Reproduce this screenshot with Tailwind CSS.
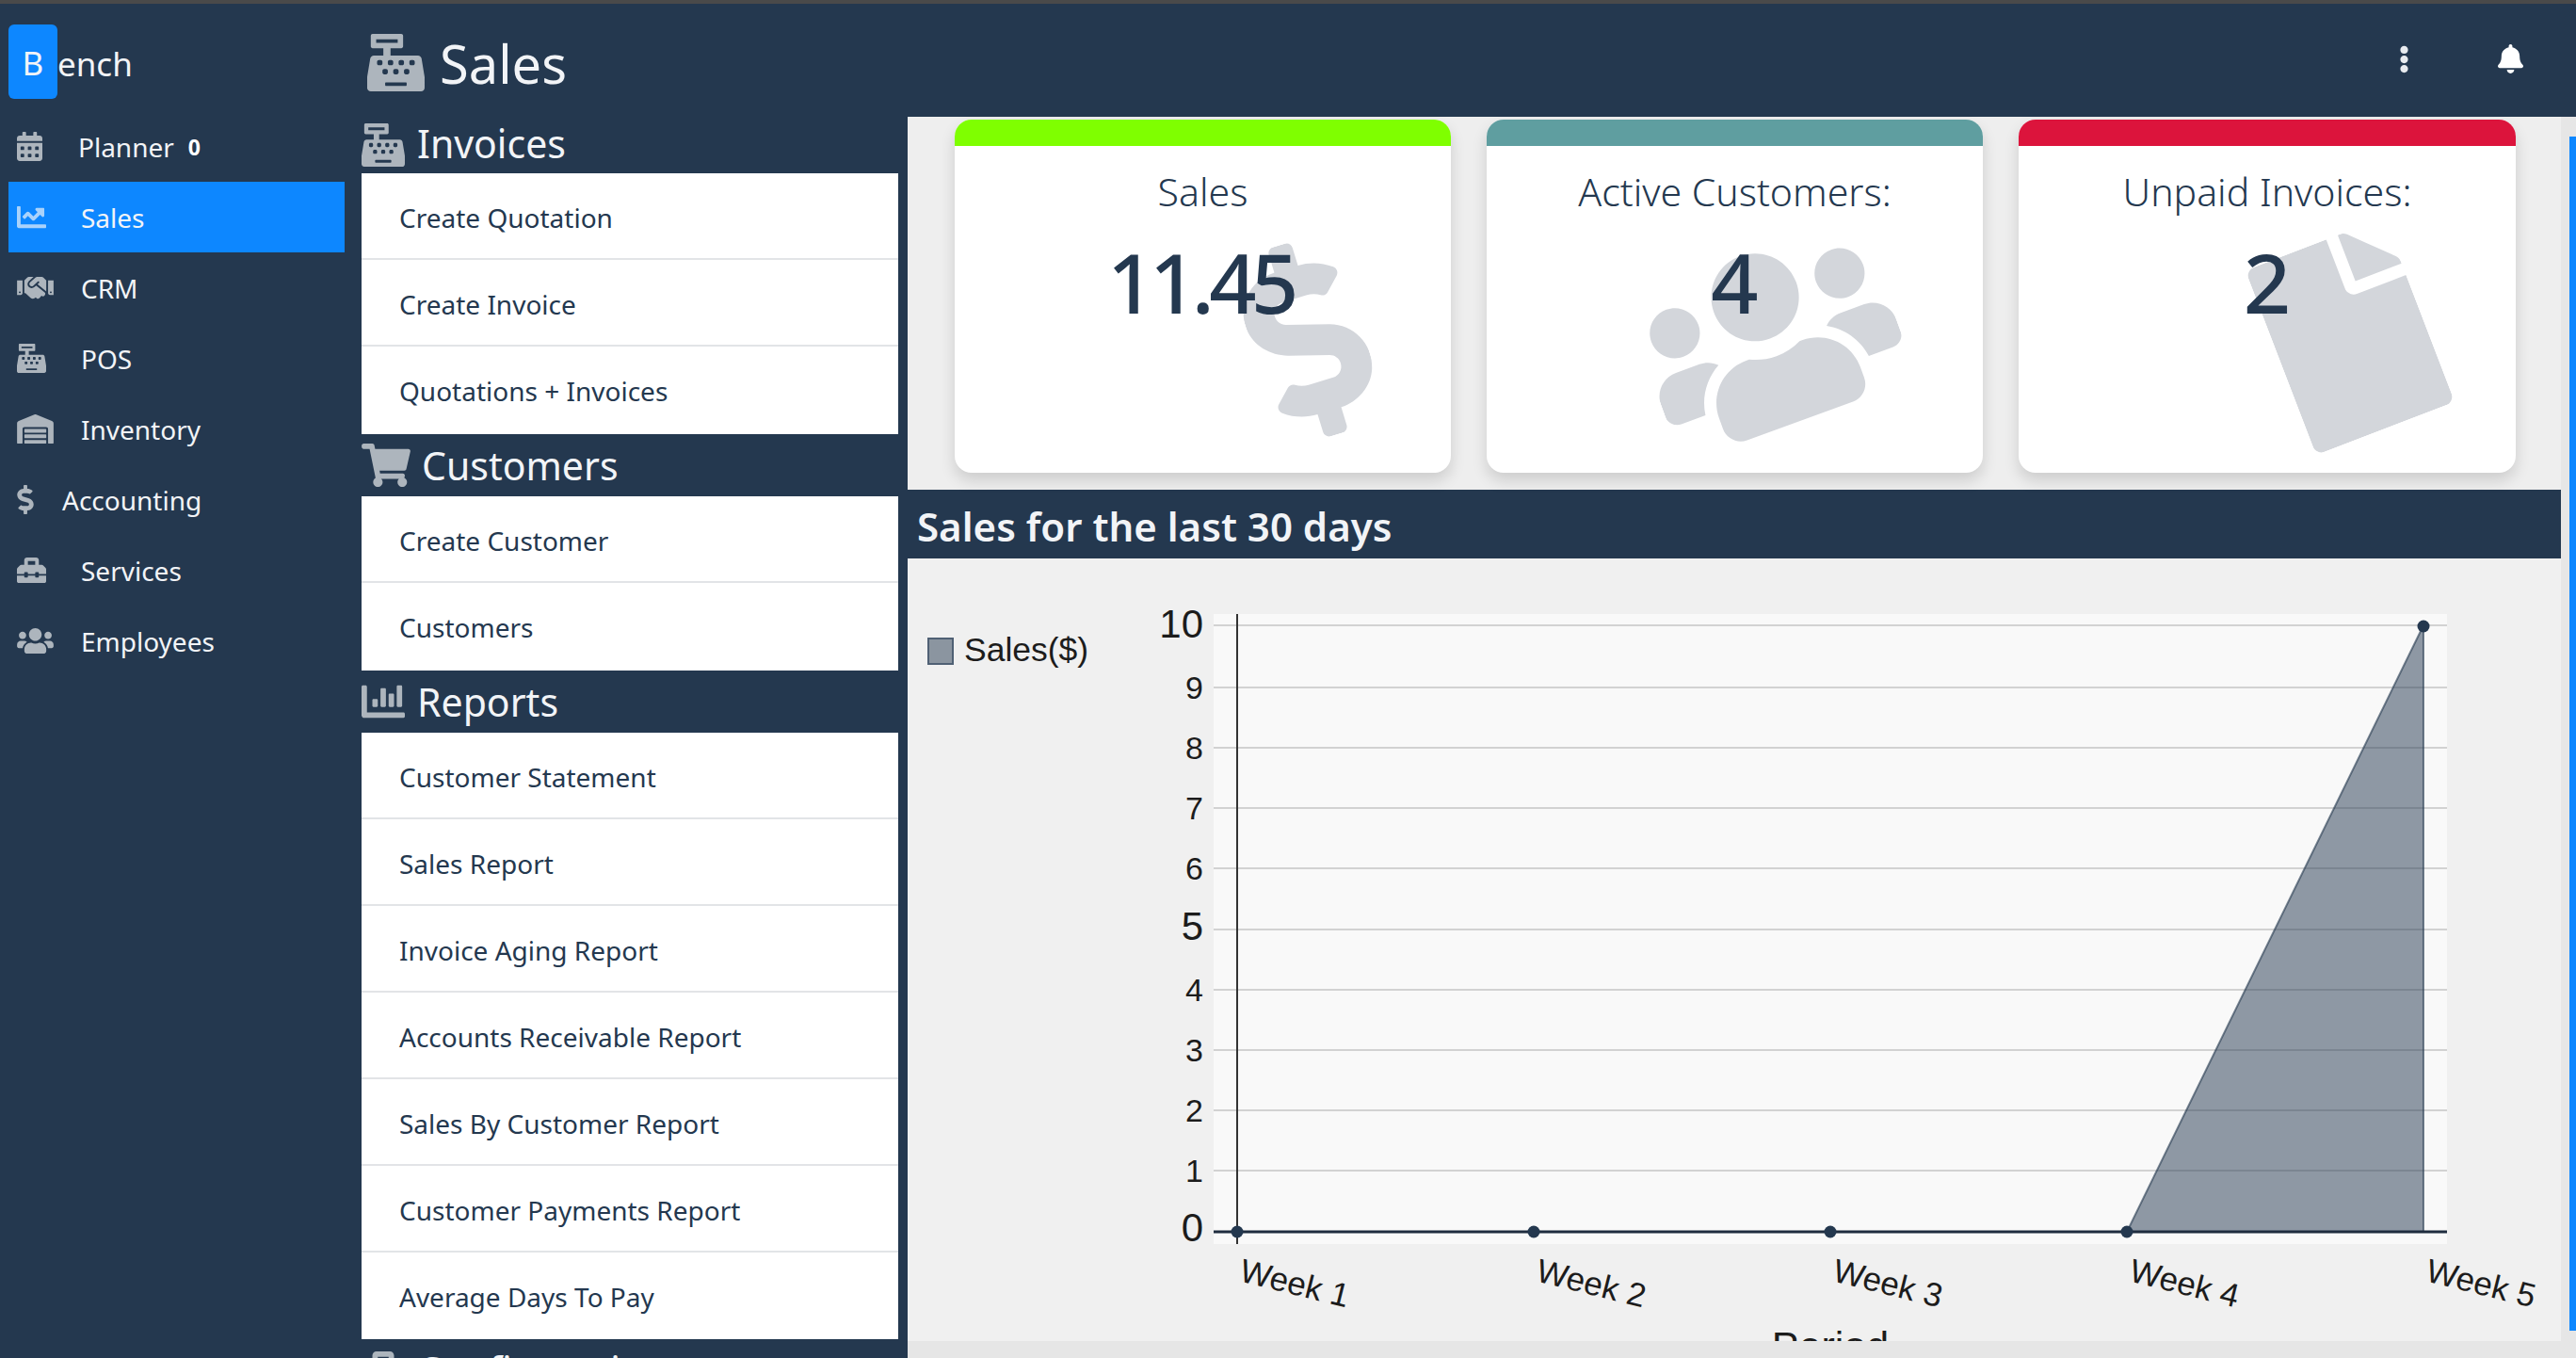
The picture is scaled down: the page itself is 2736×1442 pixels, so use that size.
<!DOCTYPE html>
<html lang="en">
<head>
  <meta charset="UTF-8">
  <title>Sales</title>
  <script src="https://cdn.jsdelivr.net/npm/@tailwindcss/browser@4"></script>
</head>
<body class="h-screen overflow-hidden bg-[#24384f] font-['Noto_Sans','Open_Sans',sans-serif] text-[28px] text-[#f2f4f7]">
  <svg class="hidden">
    <symbol id="register" viewBox="0 0 512 512"><path fill="currentColor" d="M511.1 378.8l-26.7-160c-2.6-15.4-15.9-26.7-31.6-26.7H208v-64h96c8.8 0 16-7.2 16-16V16c0-8.8-7.2-16-16-16H48c-8.8 0-16 7.2-16 16v96c0 8.8 7.2 16 16 16h96v64H59.1c-15.6 0-29 11.3-31.6 26.7L.8 378.7c-.6 3.5-.9 7-.9 10.5V480c0 17.7 14.3 32 32 32h448c17.7 0 32-14.3 32-32v-90.7c.1-3.5-.2-7-.8-10.5zM280 248c0-8.8 7.2-16 16-16h16c8.8 0 16 7.2 16 16v16c0 8.8-7.2 16-16 16h-16c-8.8 0-16-7.2-16-16v-16zm-32 64h16c8.8 0 16 7.2 16 16v16c0 8.8-7.2 16-16 16h-16c-8.8 0-16-7.2-16-16v-16c0-8.8 7.2-16 16-16zm-32-80c8.8 0 16 7.2 16 16v16c0 8.8-7.2 16-16 16h-16c-8.8 0-16-7.2-16-16v-16c0-8.8 7.2-16 16-16h16zM80 80V48h192v32H80zm40 200h-16c-8.8 0-16-7.2-16-16v-16c0-8.8 7.2-16 16-16h16c8.8 0 16 7.2 16 16v16c0 8.8-7.2 16-16 16zm16 64v-16c0-8.8 7.2-16 16-16h16c8.8 0 16 7.2 16 16v16c0 8.8-7.2 16-16 16h-16c-8.8 0-16-7.2-16-16zm216 112c0 4.4-3.6 8-8 8H168c-4.4 0-8-3.6-8-8v-16c0-4.4 3.6-8 8-8h176c4.4 0 8 3.6 8 8v16zm24-112c0 8.8-7.2 16-16 16h-16c-8.8 0-16-7.2-16-16v-16c0-8.8 7.2-16 16-16h16c8.8 0 16 7.2 16 16v16zm48-80c0 8.8-7.2 16-16 16h-16c-8.8 0-16-7.2-16-16v-16c0-8.8 7.2-16 16-16h16c8.8 0 16 7.2 16 16v16z"/></symbol>
    <symbol id="calendar" viewBox="0 0 448 512"><path fill="currentColor" d="M0 464c0 26.5 21.5 48 48 48h352c26.5 0 48-21.5 48-48V192H0v272zm320-196c0-6.6 5.4-12 12-12h40c6.6 0 12 5.4 12 12v40c0 6.6-5.4 12-12 12h-40c-6.6 0-12-5.4-12-12v-40zm0 128c0-6.6 5.4-12 12-12h40c6.6 0 12 5.4 12 12v40c0 6.6-5.4 12-12 12h-40c-6.6 0-12-5.4-12-12v-40zM192 268c0-6.6 5.4-12 12-12h40c6.6 0 12 5.4 12 12v40c0 6.6-5.4 12-12 12h-40c-6.6 0-12-5.4-12-12v-40zm0 128c0-6.6 5.4-12 12-12h40c6.6 0 12 5.4 12 12v40c0 6.6-5.4 12-12 12h-40c-6.6 0-12-5.4-12-12v-40zM64 268c0-6.6 5.4-12 12-12h40c6.6 0 12 5.4 12 12v40c0 6.6-5.4 12-12 12H76c-6.6 0-12-5.4-12-12v-40zm0 128c0-6.6 5.4-12 12-12h40c6.6 0 12 5.4 12 12v40c0 6.6-5.4 12-12 12H76c-6.6 0-12-5.4-12-12v-40zM400 64h-48V16c0-8.8-7.2-16-16-16h-32c-8.8 0-16 7.2-16 16v48H160V16c0-8.8-7.2-16-16-16h-32c-8.8 0-16 7.2-16 16v48H48C21.5 64 0 85.5 0 112v48h448v-48c0-26.5-21.5-48-48-48z"/></symbol>
    <symbol id="chartline" viewBox="0 0 512 512"><path fill="currentColor" d="M496 384H64V80c0-8.84-7.16-16-16-16H16C7.16 64 0 71.16 0 80v336c0 17.67 14.33 32 32 32h464c8.84 0 16-7.16 16-16v-32c0-8.84-7.16-16-16-16zM464 96H345.94c-21.38 0-32.09 25.85-16.97 40.97l32.4 32.4L288 242.75l-73.37-73.37c-12.5-12.5-32.76-12.5-45.25 0l-68.69 68.69c-6.25 6.25-6.25 16.38 0 22.63l22.62 22.62c6.25 6.25 16.38 6.25 22.63 0L192 237.25l73.37 73.37c12.5 12.5 32.76 12.5 45.25 0l96-96 32.4 32.4c15.12 15.12 40.97 4.41 40.97-16.97V112c.01-8.84-7.15-16-15.99-16z"/></symbol>
    <symbol id="handshake" viewBox="0 0 640 512"><path fill="currentColor" d="M434.7 64h-85.9c-8 0-15.7 3-21.6 8.4l-98.3 90c-.1.1-.2.3-.3.4-16.6 15.6-16.3 40.5-2.1 56 12.7 13.9 39.4 17.6 56.1 2.7.1-.1.3-.1.4-.2l79.9-73.2c6.5-5.9 16.7-5.5 22.6 1 6 6.5 5.5 16.6-1 22.6l-26.1 23.9L504 313.8c2.9 2.4 5.5 5 7.9 7.7V128l-54.6-54.6c-5.9-6-14.1-9.4-22.6-9.4zM544 128.2v223.9c0 17.7 14.3 32 32 32h64V128.2h-96zm48 223.9c-8.8 0-16-7.2-16-16s7.2-16 16-16 16 7.2 16 16-7.2 16-16 16zM0 384h64c17.7 0 32-14.3 32-32V128.2H0V384zm48-63.9c8.8 0 16 7.2 16 16s-7.2 16-16 16-16-7.2-16-16c0-8.9 7.2-16 16-16zm435.9 18.6L334.6 217.5l-30 27.5c-29.7 27.1-75.2 24.5-101.7-4.4-26.9-29.4-24.8-74.9 4.4-101.7L289.1 64h-83.8c-8.5 0-16.6 3.4-22.6 9.4L128 128v223.9h18.3l90.5 81.9c27.4 22.3 67.7 18.1 90-9.3l.2-.2 17.9 15.5c15.9 13 39.4 10.5 52.3-5.4l31.4-38.6 5.4 4.4c13.7 11.1 33.9 9.1 45-4.7l9.5-11.7c11.2-13.8 9.1-33.9-4.6-45.1z"/></symbol>
    <symbol id="warehouse" viewBox="0 0 640 512"><path fill="currentColor" d="M504 352H136.4c-4.4 0-8 3.6-8 8l-.1 48c0 4.4 3.6 8 8 8H504c4.4 0 8-3.6 8-8v-48c0-4.4-3.6-8-8-8zm0 96H136.1c-4.4 0-8 3.6-8 8l-.1 48c0 4.4 3.6 8 8 8h368c4.4 0 8-3.6 8-8v-48c0-4.4-3.6-8-8-8zm0-192H136.6c-4.4 0-8 3.6-8 8l-.1 48c0 4.4 3.6 8 8 8H504c4.4 0 8-3.6 8-8v-48c0-4.4-3.6-8-8-8zm106.5-139L338.4 3.7a48.15 48.15 0 0 0-36.9 0L29.5 117C11.7 124.5 0 141.9 0 161.3V504c0 4.4 3.6 8 8 8h80c4.4 0 8-3.6 8-8V256c0-17.6 14.6-32 32.6-32h382.8c18 0 32.6 14.4 32.6 32v248c0 4.4 3.6 8 8 8h80c4.4 0 8-3.6 8-8V161.3c0-19.4-11.7-36.8-29.5-44.3z"/></symbol>
    <symbol id="dollar" viewBox="0 0 288 512"><path fill="currentColor" d="M209.2 233.4l-108-31.6C88.7 198.2 80 186.5 80 173.5c0-16.3 13.2-29.5 29.5-29.5h66.3c12.2 0 24.2 3.7 34.2 10.5 6.1 4.1 14.3 3.1 19.5-2l34.8-34c7.1-6.9 6.1-18.4-1.8-24.5C238 74.8 207.4 64.1 176 64V16c0-8.8-7.2-16-16-16h-32c-8.8 0-16 7.2-16 16v48h-2.5C45.8 64-5.4 118.7.5 183.6c4.2 46.1 39.4 83.6 83.8 96.6l102.5 30c12.5 3.7 21.2 15.3 21.2 28.3 0 16.3-13.2 29.5-29.5 29.5h-66.3C100 368 88 364.3 78 357.5c-6.1-4.1-14.3-3.1-19.5 2l-34.8 34c-7.1 6.9-6.1 18.4 1.8 24.5 24.5 19.2 55.1 29.9 86.5 30v48c0 8.8 7.2 16 16 16h32c8.8 0 16-7.2 16-16v-48.2c46.6-.9 90.3-28.6 105.7-72.7 21.5-61.6-14.6-124.8-72.5-141.7z"/></symbol>
    <symbol id="toolbox" viewBox="0 0 512 512"><path fill="currentColor" d="M502.63 214.63l-45.25-45.25c-6-6-14.14-9.37-22.63-9.37H384V80c0-26.51-21.49-48-48-48H176c-26.51 0-48 21.49-48 48v80H77.25c-8.49 0-16.62 3.37-22.63 9.37L9.37 214.63c-6 6-9.37 14.14-9.37 22.63V320h128v-16c0-8.84 7.16-16 16-16h32c8.84 0 16 7.16 16 16v16h128v-16c0-8.84 7.16-16 16-16h32c8.84 0 16 7.16 16 16v16h128v-82.75c0-8.48-3.37-16.62-9.37-22.62zM320 160H192V96h128v64zm64 208c0 8.84-7.16 16-16 16h-32c-8.84 0-16-7.16-16-16v-16H192v16c0 8.84-7.16 16-16 16h-32c-8.84 0-16-7.16-16-16v-16H0v96c0 17.67 14.33 32 32 32h448c17.67 0 32-14.33 32-32v-96H384v16z"/></symbol>
    <symbol id="users" viewBox="0 0 640 512"><path fill="currentColor" d="M96 224c35.3 0 64-28.7 64-64s-28.7-64-64-64-64 28.7-64 64 28.7 64 64 64zm448 0c35.3 0 64-28.7 64-64s-28.7-64-64-64-64 28.7-64 64 28.7 64 64 64zm32 32h-64c-17.6 0-33.5 7.1-45.1 18.6 40.3 22.1 68.9 62 75.1 109.4h66c17.7 0 32-14.3 32-32v-32c0-35.3-28.7-64-64-64zm-256 0c61.9 0 112-50.1 112-112S381.9 32 320 32 208 82.1 208 144s50.1 112 112 112zm76.8 32h-8.3c-20.8 10-43.9 16-68.5 16s-47.6-6-68.5-16h-8.3C179.6 288 128 339.6 128 403.2V432c0 26.5 21.5 48 48 48h288c26.5 0 48-21.5 48-48v-28.8c0-63.6-51.6-115.2-115.2-115.2zm-223.7-13.4C161.5 263.1 145.6 256 128 256H64c-35.3 0-64 28.7-64 64v32c0 17.7 14.3 32 32 32h65.9c6.3-47.4 34.9-87.3 75.2-109.4z"/></symbol>
    <symbol id="cart" viewBox="0 0 576 512"><path fill="currentColor" d="M528.12 301.319l47.273-208C578.806 78.301 567.391 64 551.99 64H159.208l-9.166-44.81C147.758 8.021 137.93 0 126.529 0H24C10.745 0 0 10.745 0 24v16c0 13.255 10.745 24 24 24h69.883l70.248 343.435C147.325 417.1 136 435.222 136 456c0 30.928 25.072 56 56 56s56-25.072 56-56c0-15.674-6.447-29.835-16.824-40h209.647C430.447 426.165 424 440.326 424 456c0 30.928 25.072 56 56 56s56-25.072 56-56c0-22.172-12.888-41.332-31.579-50.405l5.517-24.276c3.413-15.018-8.002-29.319-23.403-29.319H218.117l-6.545-32h293.145c11.206 0 20.92-7.754 23.403-18.681z"/></symbol>
    <symbol id="chartbar" viewBox="0 0 512 512"><path fill="currentColor" d="M332.8 320h38.4c6.4 0 12.8-6.4 12.8-12.8V172.8c0-6.4-6.4-12.8-12.8-12.8h-38.4c-6.4 0-12.8 6.4-12.8 12.8v134.4c0 6.4 6.4 12.8 12.8 12.8zm96 0h38.4c6.4 0 12.8-6.4 12.8-12.8V76.8c0-6.4-6.4-12.8-12.8-12.8h-38.4c-6.4 0-12.8 6.4-12.8 12.8v230.4c0 6.4 6.4 12.8 12.8 12.8zm-288 0h38.4c6.4 0 12.8-6.4 12.8-12.8v-70.4c0-6.4-6.4-12.8-12.8-12.8h-38.4c-6.4 0-12.8 6.4-12.8 12.8v70.4c0 6.4 6.4 12.8 12.8 12.8zm96 0h38.4c6.4 0 12.8-6.4 12.8-12.8V108.8c0-6.4-6.4-12.8-12.8-12.8h-38.4c-6.4 0-12.8 6.4-12.8 12.8v198.4c0 6.4 6.4 12.8 12.8 12.8zM496 384H64V80c0-8.84-7.16-16-16-16H16C7.16 64 0 71.16 0 80v336c0 17.67 14.33 32 32 32h464c8.84 0 16-7.16 16-16v-32c0-8.84-7.16-16-16-16z"/></symbol>
    <symbol id="bell" viewBox="0 0 448 512"><path fill="currentColor" d="M224 512c35.32 0 63.97-28.65 63.97-64H160.03c0 35.35 28.65 64 63.97 64zm215.39-149.71c-19.32-20.76-55.47-51.99-55.47-154.29 0-77.7-54.48-139.9-127.94-155.16V32c0-17.67-14.32-32-31.98-32s-31.98 14.33-31.98 32v20.84C118.56 68.1 64.08 130.3 64.08 208c0 102.3-36.15 133.53-55.47 154.29-6 6.45-8.66 14.16-8.61 21.71.11 16.4 12.98 32 32.1 32h383.8c19.12 0 32-15.6 32.1-32 .05-7.55-2.61-15.27-8.61-21.71z"/></symbol>
    <symbol id="dots" viewBox="0 0 192 512"><path fill="currentColor" d="M96 184c39.8 0 72 32.2 72 72s-32.2 72-72 72-72-32.2-72-72 32.2-72 72-72zM24 80c0 39.8 32.2 72 72 72s72-32.2 72-72S135.8 8 96 8 24 40.2 24 80zm0 352c0 39.8 32.2 72 72 72s72-32.2 72-72-32.2-72-72-72-72 32.2-72 72z"/></symbol>
    <symbol id="file" viewBox="0 0 384 512"><path fill="currentColor" d="M224 136V0H24C10.7 0 0 10.7 0 24v464c0 13.3 10.7 24 24 24h336c13.3 0 24-10.7 24-24V160H248c-13.2 0-24-10.8-24-24zm160-14.1v6.1H256V0h6.1c6.4 0 12.5 2.5 17 7l97.9 98c4.5 4.5 7 10.6 7 16.9z"/></symbol>
  </svg>

  <div class="h-[4px] bg-[#4a4a4a]"></div>
  <div class="flex h-[1438px]">
    <!-- sidebar -->
    <aside class="w-[384px] shrink-0 pl-[9px] pr-[18px]">
      <div class="flex h-[114px] items-start pt-[22px]">
        <div class="flex h-[79px] w-[52px] items-center justify-center rounded-[6px] bg-[#0d87ff] pt-[3px] text-[35px]">B</div>
        <span class="mt-[20px] text-[35px] leading-[44px]">ench</span>
      </div>
      <nav class="text-[#f2f4f7]">
        <a class="flex h-[75px] items-center pl-[9px]"><svg class="h-[31px] w-[27px] text-[#adb5bd]"><use href="#calendar"/></svg><span class="ml-[38px]">Planner</span><span class="ml-[15px] mt-[2px] text-[23px] font-bold text-white">0</span></a>
        <a class="flex h-[75px] items-center bg-[#0d87ff] pl-[9px]"><svg class="h-[31px] w-[31px] text-[#a9d2fb]"><use href="#chartline"/></svg><span class="ml-[37px]">Sales</span></a>
        <a class="flex h-[75px] items-center pl-[9px]"><svg class="h-[31px] w-[39px] text-[#adb5bd]"><use href="#handshake"/></svg><span class="ml-[29px]">CRM</span></a>
        <a class="flex h-[75px] items-center pl-[9px]"><svg class="h-[31px] w-[31px] text-[#adb5bd]"><use href="#register"/></svg><span class="ml-[37px]">POS</span></a>
        <a class="flex h-[75px] items-center pl-[9px]"><svg class="h-[31px] w-[39px] text-[#adb5bd]"><use href="#warehouse"/></svg><span class="ml-[29px]">Inventory</span></a>
        <a class="flex h-[75px] items-center pl-[9px]"><svg class="h-[31px] w-[18px] text-[#adb5bd]"><use href="#dollar"/></svg><span class="ml-[30px]">Accounting</span></a>
        <a class="flex h-[75px] items-center pl-[9px]"><svg class="h-[31px] w-[31px] text-[#adb5bd]"><use href="#toolbox"/></svg><span class="ml-[37px]">Services</span></a>
        <a class="flex h-[75px] items-center pl-[9px]"><svg class="h-[31px] w-[39px] text-[#adb5bd]"><use href="#users"/></svg><span class="ml-[29px]">Employees</span></a>
      </nav>
    </aside>

    <div class="flex min-w-0 flex-1 flex-col">
      <!-- page header -->
      <header class="flex h-[120px] shrink-0 items-center pl-[6px] pr-[56px] pt-[5px]">
        <svg class="h-[61px] w-[61px] text-[#adb5bd]"><use href="#register"/></svg>
        <h1 class="ml-[16px] text-[56px] font-normal leading-none">Sales</h1>
        <button class="ml-auto -mt-[8px]"><svg class="block h-[30px] w-[11px] text-[#e8ebef]"><use href="#dots"/></svg></button>
        <button class="ml-[94px] -mt-[8px]"><svg class="block h-[31px] w-[27px] text-white"><use href="#bell"/></svg></button>
      </header>

      <div class="flex min-h-0 flex-1">
        <!-- sub menu -->
        <div class="w-[580px] shrink-0 overflow-hidden pr-[10px]">
          <h3 class="flex h-[60px] items-center text-[41px] leading-none"><svg class="mr-[13px] h-[46px] w-[46px] shrink-0 text-[#adb5bd]"><use href="#register"/></svg><span class="-mt-[3px]">Invoices</span></h3>
          <ul class="divide-y-2 divide-[#e2e4e7] bg-white text-[#24384f]">
            <li class="flex h-[92px] items-center pl-[40px] pt-[4px]">Create Quotation</li>
            <li class="flex h-[92px] items-center pl-[40px] pt-[4px]">Create Invoice</li>
            <li class="flex h-[93px] items-center pl-[40px] pt-[1px]">Quotations + Invoices</li>
          </ul>
          <h3 class="flex h-[66px] items-center text-[41px] leading-none"><svg class="mr-[12px] h-[46px] w-[52px] shrink-0 text-[#adb5bd]"><use href="#cart"/></svg>Customers</h3>
          <ul class="divide-y-2 divide-[#e2e4e7] bg-white text-[#24384f]">
            <li class="flex h-[92px] items-center pl-[40px] pt-[4px]">Create Customer</li>
            <li class="flex h-[93px] items-center pl-[40px] pt-[1px]">Customers</li>
          </ul>
          <h3 class="flex h-[66px] items-center text-[41px] leading-none"><svg class="mr-[13px] h-[46px] w-[46px] shrink-0 text-[#adb5bd]"><use href="#chartbar"/></svg>Reports</h3>
          <ul class="divide-y-2 divide-[#e2e4e7] bg-white text-[#24384f]">
            <li class="flex h-[92px] items-center pl-[40px] pt-[4px]">Customer Statement</li>
            <li class="flex h-[92px] items-center pl-[40px] pt-[4px]">Sales Report</li>
            <li class="flex h-[92px] items-center pl-[40px] pt-[4px]">Invoice Aging Report</li>
            <li class="flex h-[92px] items-center pl-[40px] pt-[4px]">Accounts Receivable Report</li>
            <li class="flex h-[92px] items-center pl-[40px] pt-[4px]">Sales By Customer Report</li>
            <li class="flex h-[92px] items-center pl-[40px] pt-[4px]">Customer Payments Report</li>
            <li class="flex h-[92px] items-center pl-[40px] pt-[1px]">Average Days To Pay</li>
          </ul>
          <h3 class="flex h-[66px] items-center text-[41px] leading-none"><svg class="mr-[13px] h-[46px] w-[46px] shrink-0 text-[#adb5bd]"><use href="#toolbox"/></svg>Configuration</h3>
        </div>

        <!-- main content -->
        <main class="flex min-w-0 flex-1 bg-[#eeeeee]">
          <div class="flex w-[1756px] shrink-0 flex-col">
            <div class="flex h-[396px] shrink-0 gap-[38px] pl-[50px] pt-[3px]">
              <div class="relative h-[375px] w-[527px] overflow-hidden rounded-[18px] bg-white text-center text-[#24384f] shadow-[0_8px_16px_rgba(0,0,0,0.14)]">
                <div class="h-[28px] bg-[#7fff00]"></div>
                <svg class="absolute left-[316px] top-[129px] h-[210px] w-[118px] -rotate-[17deg] text-[#d3d6db]"><use href="#dollar"/></svg>
                <p class="relative mt-[19px] text-[41px] font-light leading-[58px]">Sales</p>
                <p class="relative mt-[12px] pr-[5px] text-[88px] font-medium leading-[110px] tracking-[-5.5px]">11.45</p>
              </div>
              <div class="relative h-[375px] w-[527px] overflow-hidden rounded-[18px] bg-white text-center text-[#24384f] shadow-[0_8px_16px_rgba(0,0,0,0.14)]">
                <div class="h-[28px] bg-[#5f9ea0]"></div>
                <svg class="absolute left-[168px] top-[126px] h-[213px] w-[266px] -rotate-[20deg] text-[#d3d6db]"><use href="#users"/></svg>
                <p class="relative mt-[19px] text-[41px] font-light leading-[58px]">Active Customers:</p>
                <p class="relative mt-[12px] text-[88px] font-medium leading-[110px]">4</p>
              </div>
              <div class="relative h-[375px] w-[528px] overflow-hidden rounded-[18px] bg-white text-center text-[#24384f] shadow-[0_8px_16px_rgba(0,0,0,0.14)]">
                <div class="h-[28px] bg-[#dc143c]"></div>
                <svg class="absolute left-[273px] top-[125px] h-[210px] w-[158px] -rotate-[21deg] text-[#d3d6db]"><use href="#file"/></svg>
                <p class="relative mt-[19px] text-[41px] font-light leading-[58px]">Unpaid Invoices:</p>
                <p class="relative mt-[12px] text-[88px] font-medium leading-[110px]">2</p>
              </div>
            </div>
            <h4 class="flex h-[73px] shrink-0 items-center bg-[#24384f] pl-[10px] pt-[3px] text-[42px] font-semibold text-[#f2f4f7]">Sales for the last 30 days</h4>
            <div class="h-[831px] shrink-0 bg-[#f0f0f0]">
              <svg class="block h-full w-full" viewBox="964 593 1756 831" font-family="Liberation Sans, Arial, sans-serif" fill="#1c1c1c">
                <rect x="986" y="678" width="26" height="27" fill="#8b95a0" stroke="#4f6074" stroke-width="2"/>
                <text x="1024" y="702" font-size="35.5">Sales($)</text>
                <rect x="1289" y="652" width="1310" height="669" fill="#f9f9f9"/>
                <g stroke="#d2d2d2" stroke-width="2">
                  <path d="M1289 664H2599M1289 730H2599M1289 794H2599M1289 858H2599M1289 922H2599M1289 987H2599M1289 1051H2599M1289 1115H2599M1289 1179H2599M1289 1243H2599"/>
                </g>
                <path d="M2259 1308L2574 664V1308Z" fill="#24384f" fill-opacity="0.5" stroke="#24384f" stroke-opacity="0.6" stroke-width="2"/>
                <path d="M1314 652V1321" stroke="#333" stroke-width="2"/>
                <path d="M1289 1308H2599" stroke="#1f2d3f" stroke-width="3"/>
                <g fill="#24384f">
                  <circle cx="1314" cy="1308" r="6.5"/>
                  <circle cx="1629" cy="1308" r="6.5"/>
                  <circle cx="1944" cy="1308" r="6.5"/>
                  <circle cx="2259" cy="1308" r="6.5"/>
                  <circle cx="2574" cy="665" r="6.5"/>
                </g>
                <g text-anchor="end">
                  <text x="1278" y="677" font-size="42">10</text>
                  <text x="1278" y="742" font-size="34">9</text>
                  <text x="1278" y="806" font-size="34">8</text>
                  <text x="1278" y="870" font-size="34">7</text>
                  <text x="1278" y="934" font-size="34">6</text>
                  <text x="1278" y="998" font-size="42">5</text>
                  <text x="1278" y="1063" font-size="34">4</text>
                  <text x="1278" y="1127" font-size="34">3</text>
                  <text x="1278" y="1191" font-size="34">2</text>
                  <text x="1278" y="1255" font-size="34">1</text>
                  <text x="1278" y="1318" font-size="42">0</text>
                </g>
                <g font-size="35">
                  <text transform="translate(1315 1360) rotate(14)">Week 1</text>
                  <text transform="translate(1630 1360) rotate(14)">Week 2</text>
                  <text transform="translate(1945 1360) rotate(14)">Week 3</text>
                  <text transform="translate(2260 1360) rotate(14)">Week 4</text>
                  <text transform="translate(2575 1360) rotate(14)">Week 5</text>
                </g>
                <text x="1944" y="1444" font-size="43" text-anchor="middle">Period</text>
              </svg>
            </div>
            <div class="h-[18px] shrink-0 bg-[#e6e6e6]"></div>
          </div>
          <!-- scrollbar -->
          <div class="flex w-[16px] shrink-0 flex-col bg-[#e6e6e6]">
            <div class="ml-[9px] mt-[21px] h-[1268px] w-[7px] bg-[#0d87ff]"></div>
          </div>
        </main>
      </div>
    </div>
  </div>
</body>
</html>
